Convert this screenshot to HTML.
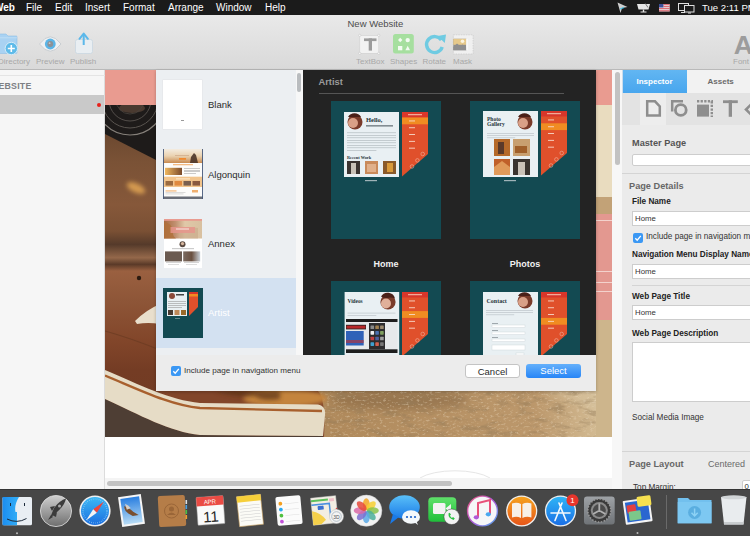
<!DOCTYPE html>
<html><head><meta charset="utf-8">
<style>
*{margin:0;padding:0;box-sizing:border-box}
html,body{width:750px;height:536px;overflow:hidden;background:#fff;font-family:"Liberation Sans",sans-serif}
.a{position:absolute}
#menubar{left:0;top:0;width:750px;height:15px;background:#1b1b1b;color:#fff;font-size:10px;line-height:15px}
#menubar span{position:absolute;top:0;white-space:nowrap}
#toolbar{left:0;top:15px;width:750px;height:55px;background:linear-gradient(#e9e9e9,#d9d9d9);border-bottom:1px solid #b9b9b9}
.tlabel{position:absolute;font-size:8px;color:#a8a8a8;top:42px;line-height:10px}
#sidebar{left:0;top:70px;width:105px;height:419px;background:#f6f6f6;border-right:1px solid #dcdcdc}
#canvas{left:105px;top:70px;width:507px;height:419px;background:#fff}
#rstrip{left:612px;top:70px;width:10px;height:419px;background:#f7f7f7}
#insp{left:622px;top:70px;width:128px;height:419px;background:#ebebeb}
#dialog{left:156px;top:70px;width:440px;height:321px;background:#ececec;box-shadow:0 1px 3px rgba(0,0,0,.25)}
#list{left:0;top:0;width:147px;height:285px;background:#eceff2;overflow:hidden}
#panel{left:147px;top:0;width:293px;height:285px;background:#232323;overflow:hidden}
#dock{left:0;top:489px;width:750px;height:47px;background:#474747;border-top:1px solid #343434}
.ltxt{position:absolute;font-size:9.5px;line-height:12px}
.ctl{font-size:9px;font-weight:bold;color:#f2f2f2;text-align:center;line-height:12px}
.btn{border-radius:3px;font-size:9.5px;text-align:center;line-height:14px}
.ib{font-weight:bold;line-height:12px}
.ih{font-size:9.2px;font-weight:bold;line-height:12px;white-space:nowrap}
.il{font-size:8.2px;font-weight:bold;color:#222;line-height:10px;white-space:nowrap}
.ir{font-size:8.2px;color:#333;line-height:10px;white-space:nowrap}
.inp{width:130px;background:#fff;border:1px solid #cdcdcd}
.it{position:absolute;left:2px;top:2px;font-size:7.8px;color:#333;line-height:10px}
.chk{width:10px;height:10px;border-radius:2px;background:#3b98f4}
</style></head><body>
<div id="menubar" class="a">
  <span style="left:-6px;font-weight:bold">Web</span>
  <span style="left:26px">File</span>
  <span style="left:55px">Edit</span>
  <span style="left:85px">Insert</span>
  <span style="left:123px">Format</span>
  <span style="left:168px">Arrange</span>
  <span style="left:216px">Window</span>
  <span style="left:265px">Help</span>
  <span style="left:702px;font-size:9.6px">Tue 2:11 PM</span>
  <svg class="a" style="left:610px;top:0" width="100" height="15" viewBox="610 0 100 15">
    <path d="M617.5 2.5 L627.5 7 L622 8 L620.5 13 Z" fill="#cfcfcf"/>
    <path d="M620 9 L624 7.5" stroke="#47c3e8" stroke-width="1.2"/>
    <path d="M637 4 H650 L648.5 9.5 H638.5 Z" fill="#e6e6e6"/>
    <rect x="642.8" y="9.5" width="1.4" height="2.5" fill="#e6e6e6"/><rect x="640.5" y="11.5" width="6" height="1" fill="#e6e6e6"/>
    <path d="M645 3 L648 7.5" stroke="#555" stroke-width="0.8"/>
    <rect x="659" y="4" width="10.7" height="7.5" fill="#e8e8ee"/>
    <rect x="659" y="4" width="4.5" height="3.5" fill="#3c4f9a"/>
    <rect x="663.5" y="4.2" width="6.2" height="1" fill="#d9525a"/><rect x="663.5" y="6.2" width="6.2" height="1" fill="#d9525a"/><rect x="659" y="8.2" width="10.7" height="1" fill="#d9525a"/><rect x="659" y="10.3" width="10.7" height="1" fill="#d9525a"/>
    <rect x="678.5" y="3.5" width="10" height="7" fill="none" stroke="#e0e0e0" stroke-width="1"/>
    <rect x="684.5" y="5.5" width="9.5" height="6.5" fill="#1b1b1b" stroke="#e0e0e0" stroke-width="1"/>
    <path d="M681 12.5 H685 M688 13 H691" stroke="#e0e0e0" stroke-width="1"/>
  </svg>
</div>
<div id="toolbar" class="a">
  <div class="a" style="left:347.5px;top:2.5px;font-size:9.5px;color:#4d4d4d;line-height:12px">New Website</div>
  <svg class="a" style="left:0;top:0" width="750" height="54" viewBox="0 15 750 54">
    <!-- directory folder -->
    <path d="M-4 34 H6 L8 36 H16.5 Q17 36 17 37 V52.5 Q17 53.5 16 53.5 H-4 Z" fill="#a9d2f2" stroke="#8fc0e6" stroke-width="0.6"/>
    <rect x="-4" y="37.5" width="21" height="0.7" fill="#c8e2f6"/>
    <circle cx="11.3" cy="48.5" r="6.2" fill="#5fbbe9" stroke="#d9ecf7" stroke-width="1"/>
    <path d="M11.3 45 V52 M7.8 48.5 H14.8" stroke="#fff" stroke-width="1.6"/>
    <!-- eye -->
    <path d="M39.5 44 Q50.3 29.5 61 44 Q50.3 58.5 39.5 44 Z" fill="#eef0f2" stroke="#c9ced2" stroke-width="1"/>
    <circle cx="50.3" cy="44" r="5.4" fill="#5bb5e7"/>
    <circle cx="50.3" cy="44" r="2.9" fill="#8d9196"/>
    <circle cx="49.6" cy="43.2" r="0.9" fill="#c4c8cc"/>
    <!-- publish -->
    <rect x="75.5" y="39.5" width="17" height="14" rx="2" fill="#e9eef2" stroke="#c9d7e1" stroke-width="0.8"/>
    <path d="M83.7 45 V35.5" stroke="#5bb8ea" stroke-width="2"/>
    <path d="M79.5 38.8 L83.7 33.6 L87.9 38.8" fill="none" stroke="#5bb8ea" stroke-width="2" stroke-linejoin="round" stroke-linecap="round"/>
    <!-- textbox -->
    <rect x="359.8" y="35.3" width="19" height="18" fill="#f2f2f2" stroke="#cfcfcf" stroke-width="0.6"/>
    <circle cx="359.8" cy="35.3" r="1.1" fill="#fff" stroke="#bdbdbd" stroke-width="0.5"/>
    <circle cx="378.8" cy="35.3" r="1.1" fill="#fff" stroke="#bdbdbd" stroke-width="0.5"/>
    <circle cx="359.8" cy="53.3" r="1.1" fill="#fff" stroke="#bdbdbd" stroke-width="0.5"/>
    <circle cx="378.8" cy="53.3" r="1.1" fill="#fff" stroke="#bdbdbd" stroke-width="0.5"/>
    <rect x="364" y="38.4" width="12.5" height="2.7" fill="#9b9b9b"/>
    <rect x="368.7" y="38.4" width="3.3" height="12.2" fill="#9b9b9b"/>
    <!-- shapes -->
    <rect x="393" y="34" width="20.8" height="19.6" rx="2.5" fill="#a6df9f"/>
    <path d="M400.2 37.8 L402.4 40 L400.2 42.2 L398 40 Z" fill="#f3fbf2"/>
    <circle cx="407.7" cy="40.1" r="2.2" fill="#f3fbf2"/>
    <rect x="398" y="46" width="4.3" height="4.3" fill="#f3fbf2"/>
    <path d="M407.7 45.8 L410 50.3 H405.4 Z" fill="#f3fbf2"/>
    <!-- rotate -->
    <path d="M441.3 40.2 A8 8 0 1 0 442.2 47" fill="none" stroke="#6fcbe2" stroke-width="3.4"/>
    <path d="M437.5 36 L446 34.5 L444.8 43 Z" fill="#6fcbe2"/>
    <!-- mask -->
    <rect x="453.3" y="34.8" width="19.8" height="19.2" fill="#f0f0f0" stroke="#c4c4c4" stroke-width="0.6" stroke-dasharray="1.5 1"/>
    <rect x="453.3" y="38.8" width="13" height="11.4" fill="#8f8f8f"/>
    <rect x="453.3" y="38.8" width="13" height="6" fill="#e6c98b"/>
    <circle cx="462.5" cy="41.3" r="1.8" fill="#fbf4e0"/>
    <path d="M453.3 47 L457 43.5 L460 46 L462.5 44.5 L466.3 47.5 V50.2 H453.3 Z" fill="#8f8f8f"/>
    <rect x="466.3" y="38.8" width="1.2" height="11.4" fill="#fff"/>
    <!-- font A -->
    <text x="733.8" y="53.8" font-family="Liberation Sans" font-size="26.5" font-weight="bold" fill="#9c9c9c">A</text>
  </svg>
  <span class="tlabel" style="left:-2px">Directory</span>
  <span class="tlabel" style="left:36px">Preview</span>
  <span class="tlabel" style="left:70px">Publish</span>
  <span class="tlabel" style="left:356px">TextBox</span>
  <span class="tlabel" style="left:390px">Shapes</span>
  <span class="tlabel" style="left:422.5px">Rotate</span>
  <span class="tlabel" style="left:453px">Mask</span>
  <span class="tlabel" style="left:733px">Font</span>
</div>
<div id="sidebar" class="a">
  <div class="a" style="left:0;top:5px;width:105px;height:1px;background:#e4e4e4"></div>
  <div class="a" style="left:-10px;top:9.5px;font-size:8.8px;font-weight:bold;color:#7d8084;line-height:12px;letter-spacing:0.2px">WEBSITE</div>
  <div class="a" style="left:0;top:25px;width:104px;height:19px;background:#c9c9c9"></div>
  <div class="a" style="left:97px;top:32.5px;width:4px;height:4px;border-radius:2px;background:#e8201a"></div>
</div>
<div id="canvas" class="a">
<svg width="507" height="419" viewBox="105 70 507 419" style="position:absolute;left:0;top:0">
<defs>
<filter id="grain" x="0" y="0" width="100%" height="100%"><feTurbulence type="fractalNoise" baseFrequency="0.06 0.16" numOctaves="4" seed="7"/><feColorMatrix type="matrix" values="0 0 0 0 0.30  0 0 0 0 0.20  0 0 0 0 0.10  3.5 0 0 0 -1.75"/></filter><filter id="grainL" x="0" y="0" width="100%" height="100%"><feTurbulence type="fractalNoise" baseFrequency="0.3 0.5" numOctaves="2" seed="11"/><feColorMatrix type="matrix" values="0 0 0 0 0.88  0 0 0 0 0.76  0 0 0 0 0.58  4 0 0 0 -2.2"/></filter><filter id="blur4" x="-20%" y="-50%" width="140%" height="200%"><feGaussianBlur stdDeviation="4"/></filter><filter id="blur2" x="-30%" y="-60%" width="160%" height="220%"><feGaussianBlur stdDeviation="2"/></filter><clipPath id="camclip"><path d="M105 105 H160 V162 L105 134 Z"/></clipPath>
<linearGradient id="lea" x1="0" y1="105" x2="0" y2="437" gradientUnits="userSpaceOnUse">
<stop offset="0" stop-color="#5e3f2a"/><stop offset="0.17" stop-color="#7a5236"/><stop offset="0.3" stop-color="#86583a"/><stop offset="0.38" stop-color="#7a5034"/><stop offset="0.42" stop-color="#553a2a"/>
<stop offset="0.46" stop-color="#94684a"/><stop offset="0.48" stop-color="#5a3a28"/><stop offset="0.5" stop-color="#9a6040"/><stop offset="0.587" stop-color="#8e5638"/><stop offset="0.708" stop-color="#82462a"/><stop offset="0.798" stop-color="#743c24"/><stop offset="1" stop-color="#6e3a22"/></linearGradient>
<radialGradient id="spot" cx="0.5" cy="0.5" r="0.5"><stop offset="0" stop-color="#e8b060"/><stop offset="1" stop-color="#a06a3a" stop-opacity="0"/></radialGradient>
<linearGradient id="sand" x1="105" y1="0" x2="612" y2="0" gradientUnits="userSpaceOnUse"><stop offset="0" stop-color="#8a6e55"/><stop offset="0.45" stop-color="#b08a5c"/><stop offset="0.85" stop-color="#bc986c"/><stop offset="1" stop-color="#d8c39c"/></linearGradient>
</defs>
<rect x="105" y="69" width="507" height="36" fill="#e99b90"/>
<rect x="105" y="105" width="507" height="332" fill="url(#lea)"/>
<path d="M105 105 H160 V162 L105 134 Z" fill="#1e1b1a"/>
<g clip-path="url(#camclip)"><ellipse cx="132" cy="108" rx="13" ry="5" fill="#4a3a30"/><circle cx="130" cy="100" r="35" fill="none" stroke="#86807a" stroke-width="1.2"/><circle cx="130" cy="100" r="28" fill="none" stroke="#5a5550" stroke-width="1"/><circle cx="130" cy="100" r="21" fill="none" stroke="#5a5550" stroke-width="0.9"/><circle cx="130" cy="100" r="14" fill="none" stroke="#4a4540" stroke-width="0.8"/></g>
<ellipse cx="136" cy="188" rx="10" ry="4.5" fill="#d49a50" transform="rotate(25 136 188)" filter="url(#blur2)"/>
<circle cx="139" cy="278" r="2.2" fill="#2a1a10"/>
<path d="M105 331 Q130 338 160 350" fill="none" stroke="#6a3a22" stroke-width="1.2" opacity="0.7"/><path d="M135 321 Q146 310 160 304 L160 324 Q148 322 137 324 Z" fill="#e9dfcc"/>
<rect x="105" y="391" width="507" height="46" fill="url(#sand)"/>
<ellipse cx="400" cy="400" rx="70" ry="10" fill="#5a4028" opacity="0.3" filter="url(#blur4)"/><path d="M540 391 Q585 400 612 425 V391 Z" fill="#d8c4a0" opacity="0.7" filter="url(#blur4)"/><rect x="105" y="391" width="507" height="46" filter="url(#grain)" opacity="0.5"/><rect x="105" y="391" width="507" height="46" filter="url(#grainL)" opacity="0.35"/>
<path d="M105 391 H318 Q326 400 324 437 H105Z" fill="#82462a"/>
<ellipse cx="285" cy="398" rx="42" ry="9" fill="#c4843e" filter="url(#blur2)"/>
<path d="M215 391 Q235 398 255 396 Q262 402 280 399 L280 391Z" fill="#5a3018" opacity="0.7" filter="url(#blur2)"/>
<path d="M105 399 C140 415 170 432 200 435 L323 436 V437 H105 Z" fill="#4e3e34"/>
<path d="M105 370 C140 385 170 400 200 403 L318 404.5 Q326 406 325 415 L323 436 L200 435 C170 432 140 415 105 399 Z" fill="#e6dcc6"/>
<path d="M105 375.5 C140 390 170 405 200 408 L322 411" fill="none" stroke="#a8602e" stroke-width="2.4"/>
<rect x="596" y="105" width="16" height="92" fill="#e9dcbf"/>
<rect x="596" y="197" width="16" height="17" fill="#c2a277"/>
<rect x="596" y="214" width="16" height="106" fill="#e39890"/>
<rect x="596" y="220" width="16" height="1" fill="#f3d2cc"/>
<rect x="596" y="271" width="16" height="1" fill="#f3d2cc"/>
<rect x="596" y="282" width="16" height="1" fill="#f3d2cc"/>
<rect x="596" y="291" width="16" height="1" fill="#f3d2cc"/>
<rect x="596" y="320" width="16" height="117" fill="#cdb58c"/>
<rect x="105" y="437" width="507" height="52" fill="#fff"/>
<path d="M420 478 A40 14 0 0 1 490 478" fill="none" stroke="#e6e6e6" stroke-width="1"/>
<rect x="105" y="478" width="507" height="11" fill="#f4f4f4"/>
<rect x="107" y="481" width="345" height="5" rx="2.5" fill="#c2c2c2"/>
</svg>
</div>
<div id="rstrip" class="a"><div class="a" style="left:3px;top:2px;width:5px;height:93px;border-radius:2.5px;background:#c2c2c2"></div></div>
<div id="insp" class="a">
  <div class="a" style="left:0;top:0;width:65px;height:23px;background:linear-gradient(#62b6f2,#48a6ee)"></div><div class="a" style="left:0;top:0;width:1px;height:23px;background:#c9dcec"></div>
  <div class="a" style="left:65px;top:0;width:63px;height:23px;background:#f2f2f2"></div>
  <div class="a ib" style="left:14.5px;top:6px;color:#fff;font-size:8px">Inspector</div>
  <div class="a ib" style="left:85.5px;top:6px;color:#6b6b6b;font-size:8px">Assets</div>
  <div class="a" style="left:0;top:23px;width:128px;height:32px;background:#e3e3e3"></div>
  <div class="a" style="left:18px;top:23px;width:26px;height:32px;background:#ededed"></div>
  <svg class="a" style="left:0;top:23px" width="128" height="32" viewBox="622 93 128 32">
    <path d="M647.2 101.3 H655 L659.8 106.5 V115.6 H647.2 Z" fill="none" stroke="#8e8e8e" stroke-width="2.5" stroke-linejoin="miter"/>
    <path d="M672.2 111.5 V101.3 H683" fill="none" stroke="#8e8e8e" stroke-width="2.5"/>
    <circle cx="680.8" cy="110" r="5.4" fill="none" stroke="#8e8e8e" stroke-width="2.8"/>
    <rect x="697" y="104.6" width="12" height="12" fill="#8e8e8e"/>
    <path d="M697 101.2 H713 M711.8 101.2 V117" fill="none" stroke="#8e8e8e" stroke-width="2.4" stroke-dasharray="2.3 1.3"/>
    <rect x="723" y="100.3" width="14.8" height="2.8" fill="#8e8e8e"/>
    <rect x="728.7" y="100.3" width="3.3" height="16.5" fill="#8e8e8e"/>
    <path d="M752 103.5 L746 109.5 L752 115.5" fill="none" stroke="#8e8e8e" stroke-width="2.6"/>
  </svg>
  <div class="a ih" style="left:10px;top:67px;color:#555">Master Page</div>
  <div class="a inp" style="left:10px;top:84px;height:12px;border-radius:2px"></div>
  <div class="a" style="left:0;top:103px;width:128px;height:1px;background:#d4d4d4"></div>
  <div class="a ih" style="left:7px;top:110px;color:#676767">Page Details</div>
  <div class="a il" style="left:10px;top:127px">File Name</div>
  <div class="a inp" style="left:10px;top:141px;height:15px"><span class="it">Home</span></div>
  <div class="a chk" style="left:11px;top:163px"><svg width="10" height="10" style="position:absolute;left:0;top:0"><path d="M2.3 5.2 L4.2 7.2 L7.8 2.8" fill="none" stroke="#fff" stroke-width="1.3"/></svg></div>
  <div class="a ir" style="left:24px;top:162px">Include page in navigation menu</div>
  <div class="a il" style="left:10px;top:180px">Navigation Menu Display Name</div>
  <div class="a inp" style="left:10px;top:194px;height:15px"><span class="it">Home</span></div>
  <div class="a" style="left:10px;top:215px;width:118px;height:1px;background:#d4d4d4"></div>
  <div class="a il" style="left:10px;top:222px">Web Page Title</div>
  <div class="a inp" style="left:10px;top:235px;height:15px"><span class="it">Home</span></div>
  <div class="a il" style="left:10px;top:259px">Web Page Description</div>
  <div class="a inp" style="left:10px;top:272px;height:60px"></div>
  <div class="a ir" style="left:10px;top:343px">Social Media Image</div>
  <div class="a" style="left:0;top:381px;width:128px;height:1px;background:#d4d4d4"></div>
  <div class="a ih" style="left:7px;top:388px;color:#676767">Page Layout</div>
  <div class="a ir" style="left:86px;top:388px;color:#6a6a6a;font-size:9px;line-height:12px">Centered</div>
  <div class="a ir" style="left:11px;top:413px;color:#333">Top Margin:</div>
  <div class="a inp" style="left:119.5px;top:410px;height:12px;border-radius:2px"><span class="it" style="top:1px">0</span></div>
</div>
<!--DIALOG--><div id="dialog" class="a"><div id="list" class="a"><div class="a" style="left:0;top:208px;width:140px;height:70px;background:#d3e1f1"></div><div class="a" style="left:7px;top:10px;width:39px;height:49px;background:#fff;box-shadow:0 0 0 0.5px #e2e4e6"><div class="a" style="left:18px;top:40px;width:3px;height:1px;background:#999"></div></div><svg class="a" style="left:7px;top:79px" width="40" height="50" viewBox="0 0 40 50"><defs><linearGradient id="algh" x1="0" y1="0" x2="0" y2="1"><stop offset="0" stop-color="#f4ece0"/><stop offset="0.5" stop-color="#ead2b0"/><stop offset="1" stop-color="#c88a50"/></linearGradient><linearGradient id="algi" x1="0" y1="0" x2="1" y2="0"><stop offset="0" stop-color="#f0b860"/><stop offset="1" stop-color="#7a4a2a"/></linearGradient></defs><rect width="40" height="50" fill="#fdfcfa"/><rect x="0" y="0" width="40" height="14" fill="url(#algh)"/><path d="M27 14 L28 8 L31 4 L33 6 L35 14 Z" fill="#4a3428" opacity="0.9"/><rect x="12" y="6" width="14" height="1" fill="#c8a080" opacity="0.6"/><rect x="16" y="9" width="7" height="1.8" fill="#f08a30"/><rect x="10" y="15.3" width="20" height="0.9" fill="#f0a050"/><rect x="2" y="18.8" width="17" height="7.2" fill="url(#algi)"/><rect x="21" y="19.5" width="16" height="0.5" fill="#999"/><rect x="21" y="21" width="16" height="0.5" fill="#999"/><rect x="21" y="22.5" width="16" height="0.5" fill="#999"/><rect x="21" y="24" width="12" height="0.5" fill="#999"/><rect x="0" y="27.7" width="40" height="10.3" fill="#f2c48c"/><rect x="13" y="29.5" width="14" height="0.8" fill="#fff3e0"/><rect x="2.5" y="32" width="7.5" height="4.6" fill="#9a6a40"/><rect x="11.5" y="32" width="7.5" height="4.6" fill="#e08a40"/><rect x="20.5" y="32" width="7.5" height="4.6" fill="#7a6050"/><rect x="29.5" y="32" width="7.5" height="4.6" fill="#8a5a40"/><rect x="2.5" y="41.5" width="11" height="0.9" fill="#f0a050"/><rect x="2.5" y="43.5" width="20" height="0.5" fill="#bbb"/><rect x="2.5" y="44.7" width="18" height="0.5" fill="#bbb"/><rect x="29" y="41" width="6" height="2.5" fill="#f0b070"/><rect x="0" y="47.5" width="40" height="2.5" fill="#6a6e78"/><rect x="0" y="0" width="0.9" height="50" fill="#46587a"/><rect x="39.1" y="0" width="0.9" height="50" fill="#46587a"/></svg><svg class="a" style="left:8px;top:149px" width="38" height="49" viewBox="0 0 38 49"><defs><linearGradient id="anx" x1="0" y1="0" x2="1" y2="0"><stop offset="0" stop-color="#a86a40"/><stop offset="0.3" stop-color="#c09070"/><stop offset="0.55" stop-color="#e0c8a8"/><stop offset="1" stop-color="#d8c0a0"/></linearGradient><linearGradient id="anp2" x1="0" y1="0" x2="1" y2="0"><stop offset="0" stop-color="#7a6a60"/><stop offset="0.5" stop-color="#6a5040"/><stop offset="1" stop-color="#c8d0d8"/></linearGradient></defs><rect width="38" height="49" fill="#fff"/><rect width="38" height="19.5" fill="url(#anx)"/><rect x="0" y="0" width="38" height="1.8" fill="#e99b90"/><path d="M0 19.5 V3 Q8 4 9 12 Q8 17 12 19.5Z" fill="#b0703a" opacity="0.8"/><path d="M16 10 Q24 7 34 9 V19.5 H16Z" fill="#c8a888" opacity="0.6"/><rect x="6.5" y="8" width="24.5" height="6" fill="#e6958c" opacity="0.85"/><rect x="12" y="9.5" width="13" height="1" fill="#fbe8e4"/><circle cx="18.5" cy="25.2" r="3" fill="#5a4a40"/><circle cx="18.5" cy="24.6" r="1.6" fill="#d8b8a0"/><rect x="8" y="29.5" width="22" height="0.6" fill="#999"/><rect x="1" y="32.4" width="17" height="10" fill="#6a5a50"/><rect x="19.2" y="32.4" width="17" height="10" fill="url(#anp2)"/><rect x="2" y="43.5" width="15" height="0.5" fill="#aaa"/><rect x="20" y="43.5" width="15" height="0.5" fill="#aaa"/><rect x="4" y="45" width="11" height="0.5" fill="#bbb"/><rect x="22" y="45" width="11" height="0.5" fill="#bbb"/></svg><svg class="a" style="left:7px;top:218px" width="40" height="50" viewBox="0 0 40 50"><rect width="40" height="50" fill="#134a52"/><rect x="4" y="4" width="20" height="24" fill="#e9f0f3"/><circle cx="9" cy="8" r="3" fill="#8a4a3a"/><rect x="13" y="6" width="8" height="1.5" fill="#444"/><rect x="5" y="13" width="18" height="0.6" fill="#999"/><rect x="5" y="15" width="18" height="0.6" fill="#999"/><rect x="5" y="17" width="18" height="0.6" fill="#999"/><rect x="5" y="19" width="14" height="0.6" fill="#999"/><rect x="5" y="22" width="5" height="5" fill="#4a3a30"/><rect x="11.5" y="22" width="5" height="5" fill="#c08a5a"/><rect x="18" y="22" width="5" height="5" fill="#9a6a2a"/><path d="M26 4 H35 V19 L26 28Z" fill="#e0502b"/><rect x="26" y="4" width="9" height="2" fill="#d8362a"/><rect x="26" y="6" width="9" height="2.5" fill="#f08c22"/><rect x="12" y="30" width="5" height="0.6" fill="#9fb3b8"/></svg><span class="ltxt" style="left:52px;top:29px;color:#2a2a2a">Blank</span><span class="ltxt" style="left:52px;top:98.5px;color:#2a2a2a">Algonquin</span><span class="ltxt" style="left:52px;top:168px;color:#2a2a2a">Annex</span><span class="ltxt" style="left:52px;top:237px;color:#fff">Artist</span><div class="a" style="left:140px;top:0;width:7px;height:285px;background:#f7f7f7"></div><div class="a" style="left:141px;top:3px;width:4px;height:19px;border-radius:2px;background:#b9bcbf"></div></div><div id="panel" class="a"><div class="a" style="left:15.5px;top:5.5px;font-size:9.3px;font-weight:bold;color:#9b9b9b;line-height:13px">Artist</div><div class="a" style="left:16px;top:23px;width:245px;height:1px;background:#555"></div><svg class="a" style="left:28px;top:31px" width="110" height="138" viewBox="0 0 110 138"><rect width="110" height="138" fill="#134a52"/><rect x="13" y="11" width="55" height="65" fill="#e9f0f3"/><circle cx="24" cy="21" r="7.5" fill="#7a3b2a"/><circle cx="22" cy="22" r="5" fill="#d9a087"/><path d="M17 16 a7.5 7.5 0 0 1 13 0 Z" fill="#4a2018"/><text x="35" y="21" font-family="Liberation Serif" font-weight="bold" font-size="6.5" fill="#26343a">Hello,</text><rect x="35" y="24.2" width="27" height="1.3" fill="#6a767c"/><rect x="16" y="31.5" width="49" height="0.6" fill="#aab3b8"/><rect x="16" y="34.0" width="49" height="0.6" fill="#aab3b8"/><rect x="16" y="36.5" width="49" height="0.6" fill="#aab3b8"/><rect x="16" y="39.0" width="49" height="0.6" fill="#aab3b8"/><rect x="16" y="41.5" width="49" height="0.6" fill="#aab3b8"/><rect x="16" y="44.0" width="49" height="0.6" fill="#aab3b8"/><rect x="16" y="46.5" width="49" height="0.6" fill="#aab3b8"/><rect x="16" y="49.0" width="29.4" height="0.6" fill="#aab3b8"/><text x="16" y="57.5" font-family="Liberation Serif" font-weight="bold" font-size="4.3" fill="#26343a">Recent Work</text><rect x="16" y="60" width="13" height="13" fill="#3b3431"/><rect x="20" y="62" width="5" height="11" fill="#c9c2b8"/><rect x="34" y="60" width="13" height="13" fill="#c98a5a"/><rect x="36" y="63" width="9" height="8" fill="#e0b08a"/><rect x="52" y="60" width="13" height="13" fill="#8a5a2a"/><rect x="56" y="62" width="6" height="9" fill="#d99a3a"/><rect x="34" y="79" width="12" height="1.2" fill="#9fb3b8"/><path d="M71 11 H97 V53.0 L71 75.5 Z" fill="#e0502b"/><rect x="71" y="11" width="26" height="5.5" fill="#d8362a"/><rect x="77.0" y="13.2" width="14.0" height="1.0" fill="#f6c7b5"/><rect x="71" y="16.5" width="26" height="6.8" fill="#f08c22"/><rect x="78.0" y="19.5" width="6.0" height="0.9" fill="#f7d8c8"/><rect x="78.0" y="26.3" width="6.0" height="0.9" fill="#f7d8c8"/><rect x="78.0" y="33.1" width="6.0" height="0.9" fill="#f7d8c8"/><rect x="78.0" y="39.9" width="6.0" height="0.9" fill="#f7d8c8"/><rect x="78.0" y="46.7" width="6.0" height="0.9" fill="#f7d8c8"/><circle cx="91.7" cy="53.0" r="1.8" fill="none" stroke="#f3c2b0" stroke-width="0.5"/><circle cx="86.4" cy="59.4" r="1.8" fill="none" stroke="#f3c2b0" stroke-width="0.5"/><circle cx="81.0" cy="65.5" r="1.8" fill="none" stroke="#f3c2b0" stroke-width="0.5"/></svg><svg class="a" style="left:167px;top:31px" width="110" height="138" viewBox="0 0 110 138"><rect width="110" height="138" fill="#134a52"/><rect x="13" y="10" width="55" height="66" fill="#e9f0f3"/><circle cx="55" cy="21" r="7.5" fill="#7a3b2a"/><circle cx="53" cy="22" r="5" fill="#d9a087"/><path d="M48 16 a7.5 7.5 0 0 1 13 0 Z" fill="#4a2018"/><text x="17" y="19.5" font-family="Liberation Serif" font-weight="bold" font-size="5.5" fill="#26343a">Photo</text><text x="17" y="25" font-family="Liberation Serif" font-weight="bold" font-size="5.5" fill="#26343a">Gallery</text><rect x="17" y="32.0" width="47" height="0.5" fill="#aab3b8"/><rect x="17" y="34.3" width="47" height="0.5" fill="#aab3b8"/><rect x="17" y="36.6" width="28.2" height="0.5" fill="#aab3b8"/><rect x="24" y="38" width="16" height="17" fill="#b56a2a"/><rect x="28" y="41" width="6" height="12" fill="#5a3a2a"/><rect x="43" y="38" width="17" height="17" fill="#c8a070"/><rect x="45" y="45" width="12" height="7" fill="#a0602a"/><rect x="24" y="58" width="16" height="16" fill="#c0602a"/><path d="M24 66 L32 60 L40 66 V74 H24Z" fill="#e09a5a"/><rect x="43" y="58" width="17" height="16" fill="#3a3430"/><rect x="48" y="61" width="7" height="13" fill="#c9c2b8"/><rect x="34" y="79" width="12" height="1.2" fill="#9fb3b8"/><path d="M71 10 H97 V52.0 L71 74.5 Z" fill="#e0502b"/><rect x="71" y="10" width="26" height="5.5" fill="#d8362a"/><rect x="77.0" y="12.2" width="14.0" height="1.0" fill="#f6c7b5"/><rect x="78.0" y="18.5" width="6.0" height="0.9" fill="#f7d8c8"/><rect x="71" y="22.3" width="26" height="6.8" fill="#f08c22"/><rect x="78.0" y="25.3" width="6.0" height="0.9" fill="#f7d8c8"/><rect x="78.0" y="32.1" width="6.0" height="0.9" fill="#f7d8c8"/><rect x="78.0" y="38.9" width="6.0" height="0.9" fill="#f7d8c8"/><rect x="78.0" y="45.7" width="6.0" height="0.9" fill="#f7d8c8"/><circle cx="91.7" cy="52.0" r="1.8" fill="none" stroke="#f3c2b0" stroke-width="0.5"/><circle cx="86.4" cy="58.4" r="1.8" fill="none" stroke="#f3c2b0" stroke-width="0.5"/><circle cx="81.0" cy="64.5" r="1.8" fill="none" stroke="#f3c2b0" stroke-width="0.5"/></svg><svg class="a" style="left:28px;top:211px" width="110" height="138" viewBox="0 0 110 138"><rect width="110" height="138" fill="#134a52"/><rect x="13.6" y="11" width="54.6" height="127" fill="#e9f0f3"/><circle cx="57" cy="21" r="7.6" fill="#7a3b2a"/><circle cx="55" cy="22.5" r="5" fill="#e0b09a"/><path d="M50 15.5 a7.6 7.6 0 0 1 14 2 Q60 16 56 17 Q52 17 50 15.5Z" fill="#4a2018"/><text x="16.5" y="21.5" font-family="Liberation Serif" font-weight="bold" font-size="5.3" fill="#26343a">Videos</text><rect x="16.5" y="31.8" width="48" height="0.5" fill="#aab3b8"/><rect x="16.5" y="34.1" width="28.799999999999997" height="0.5" fill="#aab3b8"/><rect x="15" y="38" width="51.5" height="3" fill="#1e1e1e"/><rect x="15" y="41" width="51.5" height="27.3" fill="#e6e9eb"/><rect x="15" y="43.8" width="20" height="4.6" fill="#222"/><rect x="15.5" y="44.6" width="19" height="3" fill="#b8282a"/><rect x="15" y="50" width="17.7" height="14.5" fill="#2f62b8"/><rect x="15" y="59" width="17.7" height="3" fill="#c03030" opacity="0.6"/><rect x="38" y="42" width="16" height="26.3" fill="#2c2c2e"/><rect x="39.5" y="44.5" width="3.6" height="3.6" rx="0.6" fill="#8a8a8a"/><rect x="44.3" y="44.5" width="3.6" height="3.6" rx="0.6" fill="#a08050"/><rect x="49.1" y="44.5" width="3.6" height="3.6" rx="0.6" fill="#9a8a70"/><rect x="39.5" y="50.1" width="3.6" height="3.6" rx="0.6" fill="#f0f0f0"/><rect x="44.3" y="50.1" width="3.6" height="3.6" rx="0.6" fill="#4a70b0"/><rect x="49.1" y="50.1" width="3.6" height="3.6" rx="0.6" fill="#80a060"/><rect x="39.5" y="55.7" width="3.6" height="3.6" rx="0.6" fill="#c04040"/><rect x="44.3" y="55.7" width="3.6" height="3.6" rx="0.6" fill="#5060a0"/><rect x="49.1" y="55.7" width="3.6" height="3.6" rx="0.6" fill="#a0a0a0"/><rect x="39.5" y="61.3" width="3.6" height="3.6" rx="0.6" fill="#40a0d0"/><rect x="44.3" y="61.3" width="3.6" height="3.6" rx="0.6" fill="#d06050"/><rect x="49.1" y="61.3" width="3.6" height="3.6" rx="0.6" fill="#777"/><rect x="15" y="68.3" width="51.5" height="3.7" fill="#1e1e1e"/><path d="M71 11 H97 V53.0 L71 75.5 Z" fill="#e0502b"/><rect x="71" y="11" width="26" height="5.5" fill="#d8362a"/><rect x="77.0" y="13.2" width="14.0" height="1.0" fill="#f6c7b5"/><rect x="78.0" y="19.5" width="6.0" height="0.9" fill="#f7d8c8"/><rect x="78.0" y="26.3" width="6.0" height="0.9" fill="#f7d8c8"/><rect x="71" y="30.1" width="26" height="6.8" fill="#f08c22"/><rect x="78.0" y="33.1" width="6.0" height="0.9" fill="#f7d8c8"/><rect x="78.0" y="39.9" width="6.0" height="0.9" fill="#f7d8c8"/><rect x="78.0" y="46.7" width="6.0" height="0.9" fill="#f7d8c8"/><circle cx="91.7" cy="53.0" r="1.8" fill="none" stroke="#f3c2b0" stroke-width="0.5"/><circle cx="86.4" cy="59.4" r="1.8" fill="none" stroke="#f3c2b0" stroke-width="0.5"/><circle cx="81.0" cy="65.5" r="1.8" fill="none" stroke="#f3c2b0" stroke-width="0.5"/></svg><svg class="a" style="left:167px;top:211px" width="110" height="138" viewBox="0 0 110 138"><rect width="110" height="138" fill="#134a52"/><rect x="13" y="11" width="55" height="65" fill="#e9f0f3"/><circle cx="55" cy="20" r="7.5" fill="#7a3b2a"/><circle cx="53" cy="21" r="5" fill="#d9a087"/><path d="M48 15 a7.5 7.5 0 0 1 13 0 Z" fill="#4a2018"/><text x="16.5" y="21.5" font-family="Liberation Serif" font-weight="bold" font-size="6" fill="#26343a">Contact</text><rect x="16" y="29.0" width="47" height="0.5" fill="#aab3b8"/><rect x="16" y="31.3" width="47" height="0.5" fill="#aab3b8"/><rect x="16" y="33.6" width="28.2" height="0.5" fill="#aab3b8"/><rect x="22" y="42" width="6" height="0.8" fill="#8d979c"/><rect x="22" y="44" width="33" height="2.6" fill="#fff" stroke="#c8d0d4" stroke-width="0.4"/><rect x="22" y="49" width="6" height="0.8" fill="#8d979c"/><rect x="22" y="51" width="33" height="2.6" fill="#fff" stroke="#c8d0d4" stroke-width="0.4"/><rect x="22" y="56" width="6" height="0.8" fill="#8d979c"/><rect x="22" y="58" width="33" height="2.6" fill="#fff" stroke="#c8d0d4" stroke-width="0.4"/><rect x="22" y="64" width="33" height="5" fill="#fff" stroke="#c8d0d4" stroke-width="0.4"/><rect x="46" y="72" width="8" height="2" fill="#fff" stroke="#c8d0d4" stroke-width="0.4"/><path d="M71 11 H97 V53.0 L71 75.5 Z" fill="#e0502b"/><rect x="71" y="11" width="26" height="5.5" fill="#d8362a"/><rect x="77.0" y="13.2" width="14.0" height="1.0" fill="#f6c7b5"/><rect x="78.0" y="19.5" width="6.0" height="0.9" fill="#f7d8c8"/><rect x="78.0" y="26.3" width="6.0" height="0.9" fill="#f7d8c8"/><rect x="78.0" y="33.1" width="6.0" height="0.9" fill="#f7d8c8"/><rect x="71" y="36.9" width="26" height="6.8" fill="#f08c22"/><rect x="78.0" y="39.9" width="6.0" height="0.9" fill="#f7d8c8"/><rect x="78.0" y="46.7" width="6.0" height="0.9" fill="#f7d8c8"/><circle cx="91.7" cy="53.0" r="1.8" fill="none" stroke="#f3c2b0" stroke-width="0.5"/><circle cx="86.4" cy="59.4" r="1.8" fill="none" stroke="#f3c2b0" stroke-width="0.5"/><circle cx="81.0" cy="65.5" r="1.8" fill="none" stroke="#f3c2b0" stroke-width="0.5"/></svg><div class="a ctl" style="left:28px;top:188px;width:110px">Home</div><div class="a ctl" style="left:167px;top:188px;width:110px">Photos</div></div><div class="a" style="left:15px;top:295.5px;width:10px;height:10px;border-radius:2px;background:#3b98f4"><svg width="10" height="10" style="position:absolute;left:0;top:0"><path d="M2.3 5.2 L4.2 7.2 L7.8 2.8" fill="none" stroke="#fff" stroke-width="1.3"/></svg></div><div class="a" style="left:28px;top:295px;font-size:8.1px;color:#333;line-height:12px">Include page in navigation menu</div><div class="a btn" style="left:309px;top:294px;width:55px;height:14px;background:#fff;border:0.5px solid #c4c4c4;color:#2a2a2a">Cancel</div><div class="a btn" style="left:370px;top:294px;width:55px;height:14px;background:linear-gradient(#64b0fb,#2785f6);color:#fff">Select</div></div><!--/DIALOG-->
<div id="dock" class="a">
<svg width="750" height="47" viewBox="0 489 750 47" style="position:absolute;left:0;top:-1px">
<defs>
<linearGradient id="fnd" x1="0" y1="0" x2="1" y2="0"><stop offset="0" stop-color="#1b8df0"/><stop offset="1" stop-color="#35b0f7"/></linearGradient>
<linearGradient id="lp" x1="0" y1="0" x2="0" y2="1"><stop offset="0" stop-color="#d0d0d0"/><stop offset="1" stop-color="#6e6e6e"/></linearGradient>
<linearGradient id="saf" x1="0" y1="0" x2="0" y2="1"><stop offset="0" stop-color="#3cb8f5"/><stop offset="1" stop-color="#1b6fe0"/></linearGradient>
<linearGradient id="sky" x1="0" y1="0" x2="0" y2="1"><stop offset="0" stop-color="#2a7fe0"/><stop offset="1" stop-color="#b8dcf5"/></linearGradient>
<linearGradient id="ibk" x1="0" y1="0" x2="0" y2="1"><stop offset="0" stop-color="#f6a21e"/><stop offset="1" stop-color="#e6561a"/></linearGradient>
<linearGradient id="aps" x1="0" y1="0" x2="0" y2="1"><stop offset="0" stop-color="#2fb5f6"/><stop offset="1" stop-color="#1a6fe6"/></linearGradient>
<linearGradient id="msg" x1="0" y1="0" x2="0" y2="1"><stop offset="0" stop-color="#5ac0f8"/><stop offset="1" stop-color="#1a7ae8"/></linearGradient>
<linearGradient id="ft" x1="0" y1="0" x2="0" y2="1"><stop offset="0" stop-color="#5fe06a"/><stop offset="1" stop-color="#1fbf3a"/></linearGradient>
<linearGradient id="sp" x1="0" y1="0" x2="0" y2="1"><stop offset="0" stop-color="#9ea2a6"/><stop offset="1" stop-color="#6f7377"/></linearGradient>
<linearGradient id="itn" x1="0" y1="0" x2="1" y2="1"><stop offset="0" stop-color="#f25a7a"/><stop offset="0.5" stop-color="#b15ad8"/><stop offset="1" stop-color="#4ab0f0"/></linearGradient>
</defs>
<!-- Finder -->
<rect x="2.5" y="497" width="29.5" height="28.2" rx="1.5" fill="#e9eef3"/>
<path d="M2.5 497 H19 Q14 505 15.5 512 H17 V525.2 H2.5 Z" fill="url(#fnd)"/>
<path d="M7 519 Q17 524 26.5 518.5" fill="none" stroke="#1d2a3a" stroke-width="1"/>
<rect x="10" y="503" width="1" height="3" fill="#1d2a3a"/><rect x="24" y="503" width="1" height="3" fill="#1d2a3a"/>
<circle cx="17" cy="533.2" r="1" fill="#bbb"/>
<!-- Launchpad -->
<circle cx="56" cy="511" r="15.6" fill="url(#lp)" stroke="#e0e0e0" stroke-width="0.8"/>
<path d="M50 518 L54 508 Q60 500 66 498.5 Q65 505 57 512 Z" fill="#3b3b3b"/>
<path d="M50 507 L55 506 L52 511 Z M56 517 L57 512 L52 515 Z" fill="#3b3b3b"/>
<path d="M48 520 L51 515 L53 517 Z" fill="#3b3b3b"/>
<circle cx="59.5" cy="506" r="1.5" fill="#aaa"/>
<!-- Safari -->
<circle cx="95" cy="511" r="15.6" fill="#f0f0f0"/>
<circle cx="95" cy="511" r="14" fill="url(#saf)"/>
<circle cx="95" cy="511" r="12" fill="none" stroke="#a9dcf8" stroke-width="1.2" stroke-dasharray="0.5 1.5"/>
<path d="M104 501.5 L96.8 512.8 L93.2 509.2 Z" fill="#f0453a"/>
<path d="M86 520.5 L93.2 509.2 L96.8 512.8 Z" fill="#f4f4f4"/>
<!-- Mail -->
<g transform="rotate(-8 131.5 510.5)">
<rect x="120" y="495.5" width="23" height="30" fill="#f6f6f6"/>
<rect x="122" y="497.5" width="19" height="26" fill="url(#sky)"/>
<path d="M125 505 Q130 508 133 512 L138 516 L132 516 L128 513 Q124 510 125 505Z" fill="#7a5030"/>
<path d="M126 503 Q129 505 131 508 L127 509 Z" fill="#d8d0c8"/>
</g>
<!-- Contacts -->
<rect x="158.5" y="495.5" width="27" height="31" rx="2" fill="#b57d48" transform="rotate(-3 172 511)"/>
<circle cx="171.5" cy="511" r="7" fill="none" stroke="#9a6638" stroke-width="1"/>
<circle cx="171.5" cy="509" r="2.5" fill="#9a6638"/><path d="M167 515 Q171.5 510 176 515Z" fill="#9a6638"/>
<rect x="185.5" y="500" width="1.6" height="4" fill="#e0e0e0"/><rect x="185.5" y="505" width="1.6" height="4" fill="#4aa0e0"/><rect x="185.5" y="510" width="1.6" height="4" fill="#4ac04a"/><rect x="185.5" y="515" width="1.6" height="4" fill="#f0a030"/>
<!-- Calendar -->
<g transform="rotate(-4 210.5 510.5)">
<rect x="197" y="496.5" width="27" height="28" rx="1" fill="#fafafa" stroke="#999" stroke-width="0.5"/>
<rect x="197" y="496.5" width="27" height="9" fill="#ea4b44"/>
<text x="210.5" y="503.8" font-family="Liberation Sans" font-size="6" fill="#fff" text-anchor="middle">APR</text>
<text x="210.5" y="522" font-family="Liberation Sans" font-size="15" fill="#2a2a2a" text-anchor="middle">11</text>
</g>
<!-- Notes -->
<g transform="rotate(-6 250 510.5)">
<rect x="238" y="495.5" width="24" height="30" fill="#fbfbf6" stroke="#c8a060" stroke-width="0.6"/>
<rect x="238" y="495.5" width="24" height="6" fill="#f6cf3a"/>
<rect x="240" y="505" width="20" height="0.5" fill="#ccc"/><rect x="240" y="508" width="20" height="0.5" fill="#ccc"/><rect x="240" y="511" width="20" height="0.5" fill="#ccc"/><rect x="240" y="514" width="20" height="0.5" fill="#ccc"/><rect x="240" y="517" width="20" height="0.5" fill="#ccc"/><rect x="240" y="520" width="20" height="0.5" fill="#ccc"/>
</g>
<!-- Reminders -->
<g transform="rotate(-5 289 510.5)">
<rect x="276.5" y="496" width="25" height="29" rx="2" fill="#fbfbfb"/>
<circle cx="281" cy="503" r="1.9" fill="#f5a020"/><circle cx="281" cy="509" r="1.9" fill="#28a8f0"/><circle cx="281" cy="515" r="1.9" fill="#50c040"/><circle cx="281" cy="521" r="1.9" fill="#c050d8"/>
<rect x="285" y="503" width="14" height="0.5" fill="#ddd"/><rect x="285" y="509" width="14" height="0.5" fill="#ddd"/><rect x="285" y="515" width="14" height="0.5" fill="#ddd"/><rect x="285" y="521" width="14" height="0.5" fill="#ddd"/>
</g>
<!-- Maps -->
<g transform="rotate(-6 324 510.5)">
<rect x="312" y="497" width="25" height="27" fill="#f3eee2" stroke="#ddd" stroke-width="0.5"/>
<rect x="312" y="499" width="17" height="2" fill="#5cc05c"/>
<path d="M312 504 H330 V520" fill="none" stroke="#4a90e0" stroke-width="1.5"/>
<path d="M312 510 Q320 512 325 520 L320 524 H312Z" fill="#f5d04a"/>
<rect x="318" y="505.5" width="6" height="4" rx="1" fill="#3a70d0"/>
<rect x="330" y="499" width="5" height="3" fill="#f0c0c8"/>
</g>
<circle cx="336.5" cy="516.5" r="7" fill="#f4f4f4" stroke="#bbb" stroke-width="0.5"/>
<circle cx="336.5" cy="516.5" r="4.8" fill="none" stroke="#8a9aa8" stroke-width="0.6"/>
<text x="336.5" y="518.5" font-family="Liberation Sans" font-size="5" fill="#555" text-anchor="middle">3D</text>
<path d="M335.5 509 L336.5 507.5 L337.5 509Z" fill="#e04040"/>
<!-- Photos -->
<circle cx="366.3" cy="510.7" r="15.6" fill="#f2f2f2" stroke="#ccc" stroke-width="0.5"/>
<g transform="translate(366.3 510.7)">
<ellipse cx="0" cy="-6.5" rx="3.4" ry="6" fill="#f5a623" opacity="0.85"/>
<ellipse cx="0" cy="-6.5" rx="3.4" ry="6" fill="#f7d033" opacity="0.85" transform="rotate(45)"/>
<ellipse cx="0" cy="-6.5" rx="3.4" ry="6" fill="#8bc34a" opacity="0.85" transform="rotate(90)"/>
<ellipse cx="0" cy="-6.5" rx="3.4" ry="6" fill="#4caf9a" opacity="0.85" transform="rotate(135)"/>
<ellipse cx="0" cy="-6.5" rx="3.4" ry="6" fill="#5aa9e6" opacity="0.85" transform="rotate(180)"/>
<ellipse cx="0" cy="-6.5" rx="3.4" ry="6" fill="#7b6fd0" opacity="0.85" transform="rotate(225)"/>
<ellipse cx="0" cy="-6.5" rx="3.4" ry="6" fill="#d96aa8" opacity="0.85" transform="rotate(270)"/>
<ellipse cx="0" cy="-6.5" rx="3.4" ry="6" fill="#e84a3a" opacity="0.85" transform="rotate(315)"/>
</g>
<!-- Messages -->
<ellipse cx="404.5" cy="507" rx="15.3" ry="11.8" fill="url(#msg)"/>
<path d="M393 514 L390 524 L399 517 Z" fill="#1a7ae8"/>
<ellipse cx="411" cy="517" rx="9" ry="6.8" fill="#f4f8fb"/>
<path d="M414 522 L418 525 L416 520Z" fill="#f4f8fb"/>
<circle cx="407" cy="517" r="1.1" fill="#1a5ec8"/><circle cx="411" cy="517" r="1.1" fill="#1a5ec8"/><circle cx="415" cy="517" r="1.1" fill="#1a5ec8"/>
<!-- FaceTime -->
<rect x="428.3" y="497.3" width="28" height="24.5" rx="4" fill="url(#ft)"/>
<rect x="433" y="503" width="12.5" height="11" rx="1.5" fill="#f2f2f2"/>
<path d="M445.5 508.5 L451 504 V513 Z" fill="#f2f2f2"/>
<circle cx="451.7" cy="516.8" r="7.8" fill="#f2f2f2" stroke="#3a3a3a" stroke-width="0.5"/>
<path d="M448.5 513.5 Q448 518 453.5 520 L454.8 518.6 L453 517 L452 518 Q450.5 517 450 515.5 L451 514.5 L449.5 512.8 Z" fill="#28c040"/>
<!-- iTunes -->
<circle cx="482.5" cy="511" r="15.6" fill="url(#itn)"/>
<circle cx="482.5" cy="511" r="14.2" fill="#f6f6f8"/>
<path d="M478 517 V503 L490 500 V514" fill="none" stroke="#e8507a" stroke-width="2"/>
<ellipse cx="476.3" cy="517.3" rx="2.6" ry="2.1" fill="#b05ad8"/>
<ellipse cx="488.3" cy="514.3" rx="2.6" ry="2.1" fill="#4aa8f0"/>
<!-- iBooks -->
<circle cx="521.7" cy="511" r="15.6" fill="#f0f0f0"/>
<circle cx="521.7" cy="511" r="14.3" fill="url(#ibk)"/>
<path d="M512 503.5 Q517 502 521 504 V518 Q517 516 512 517.5 Z" fill="#f7f0e8"/>
<path d="M531.4 503.5 Q526.4 502 522.4 504 V518 Q526.4 516 531.4 517.5 Z" fill="#f7f0e8"/>
<!-- App Store -->
<circle cx="560.5" cy="511" r="15.6" fill="#eee"/>
<circle cx="560.5" cy="511" r="14.3" fill="url(#aps)"/>
<path d="M555 520.5 L562 503 M566 520.5 L559 503 M551 513 H570" stroke="#f4f8fc" stroke-width="1.6" stroke-linecap="round"/>
<circle cx="572.5" cy="500.2" r="6" fill="#e8352c"/>
<text x="572.5" y="503.2" font-family="Liberation Sans" font-size="8" fill="#fff" text-anchor="middle">1</text>
<!-- System Prefs -->
<rect x="584" y="496.5" width="30.7" height="28" rx="3" fill="url(#sp)"/>
<circle cx="599.3" cy="510.5" r="11.5" fill="#3a3a3a"/>
<circle cx="599.3" cy="510.5" r="11.5" fill="none" stroke="#9a9a9a" stroke-width="1.5" stroke-dasharray="1.5 1.5"/>
<circle cx="599.3" cy="510.5" r="8.5" fill="#8a8a8a"/>
<circle cx="599.3" cy="510.5" r="6.5" fill="#4a4a4a"/>
<path d="M599.3 510.5 V503.5 M599.3 510.5 L593.2 514 M599.3 510.5 L605.4 514" stroke="#b0b0b0" stroke-width="1.8"/>
<!-- Sandvox-like -->
<g transform="rotate(-8 638 510)">
<rect x="624" y="499" width="27" height="24" rx="1" fill="#f4f4f4"/>
<rect x="626" y="501" width="23" height="20" fill="#2a66d0"/>
</g>
<rect x="627" y="505" width="9" height="8" rx="1" fill="#e24040" transform="rotate(-10 631 509)"/>
<rect x="637" y="496" width="14" height="10" rx="1.5" fill="#f5e050" transform="rotate(-8 644 501)"/>
<rect x="629" y="511" width="12" height="9" rx="1" fill="#7cc88a" transform="rotate(-8 635 515)"/>
<circle cx="637.5" cy="533.1" r="1" fill="#bbb"/>
<!-- separator -->
<rect x="666" y="495" width="1" height="34" fill="#6a6a6a"/>
<!-- Downloads -->
<path d="M677.7 498 H688 L690 500 H711.5 V523.3 H677.7 Z" fill="#72c0ee"/>
<rect x="677.7" y="502" width="33.8" height="21.3" fill="#7dc8f2"/>
<circle cx="694.6" cy="512.5" r="6.5" fill="#5aaee0"/>
<path d="M694.6 508.5 V515.5 M691.5 512.8 L694.6 516 L697.7 512.8" fill="none" stroke="#8dd2f5" stroke-width="1.5"/>
<!-- Trash -->
<path d="M721 497 H746.5 L743.5 524.5 H724 Z" fill="#e9ecee"/>
<ellipse cx="733.7" cy="497.3" rx="12.8" ry="2" fill="#d0d4d6"/>
<rect x="724" y="522" width="19.5" height="2.5" fill="#c8ccce"/>
</svg>
</div>
</body></html>
